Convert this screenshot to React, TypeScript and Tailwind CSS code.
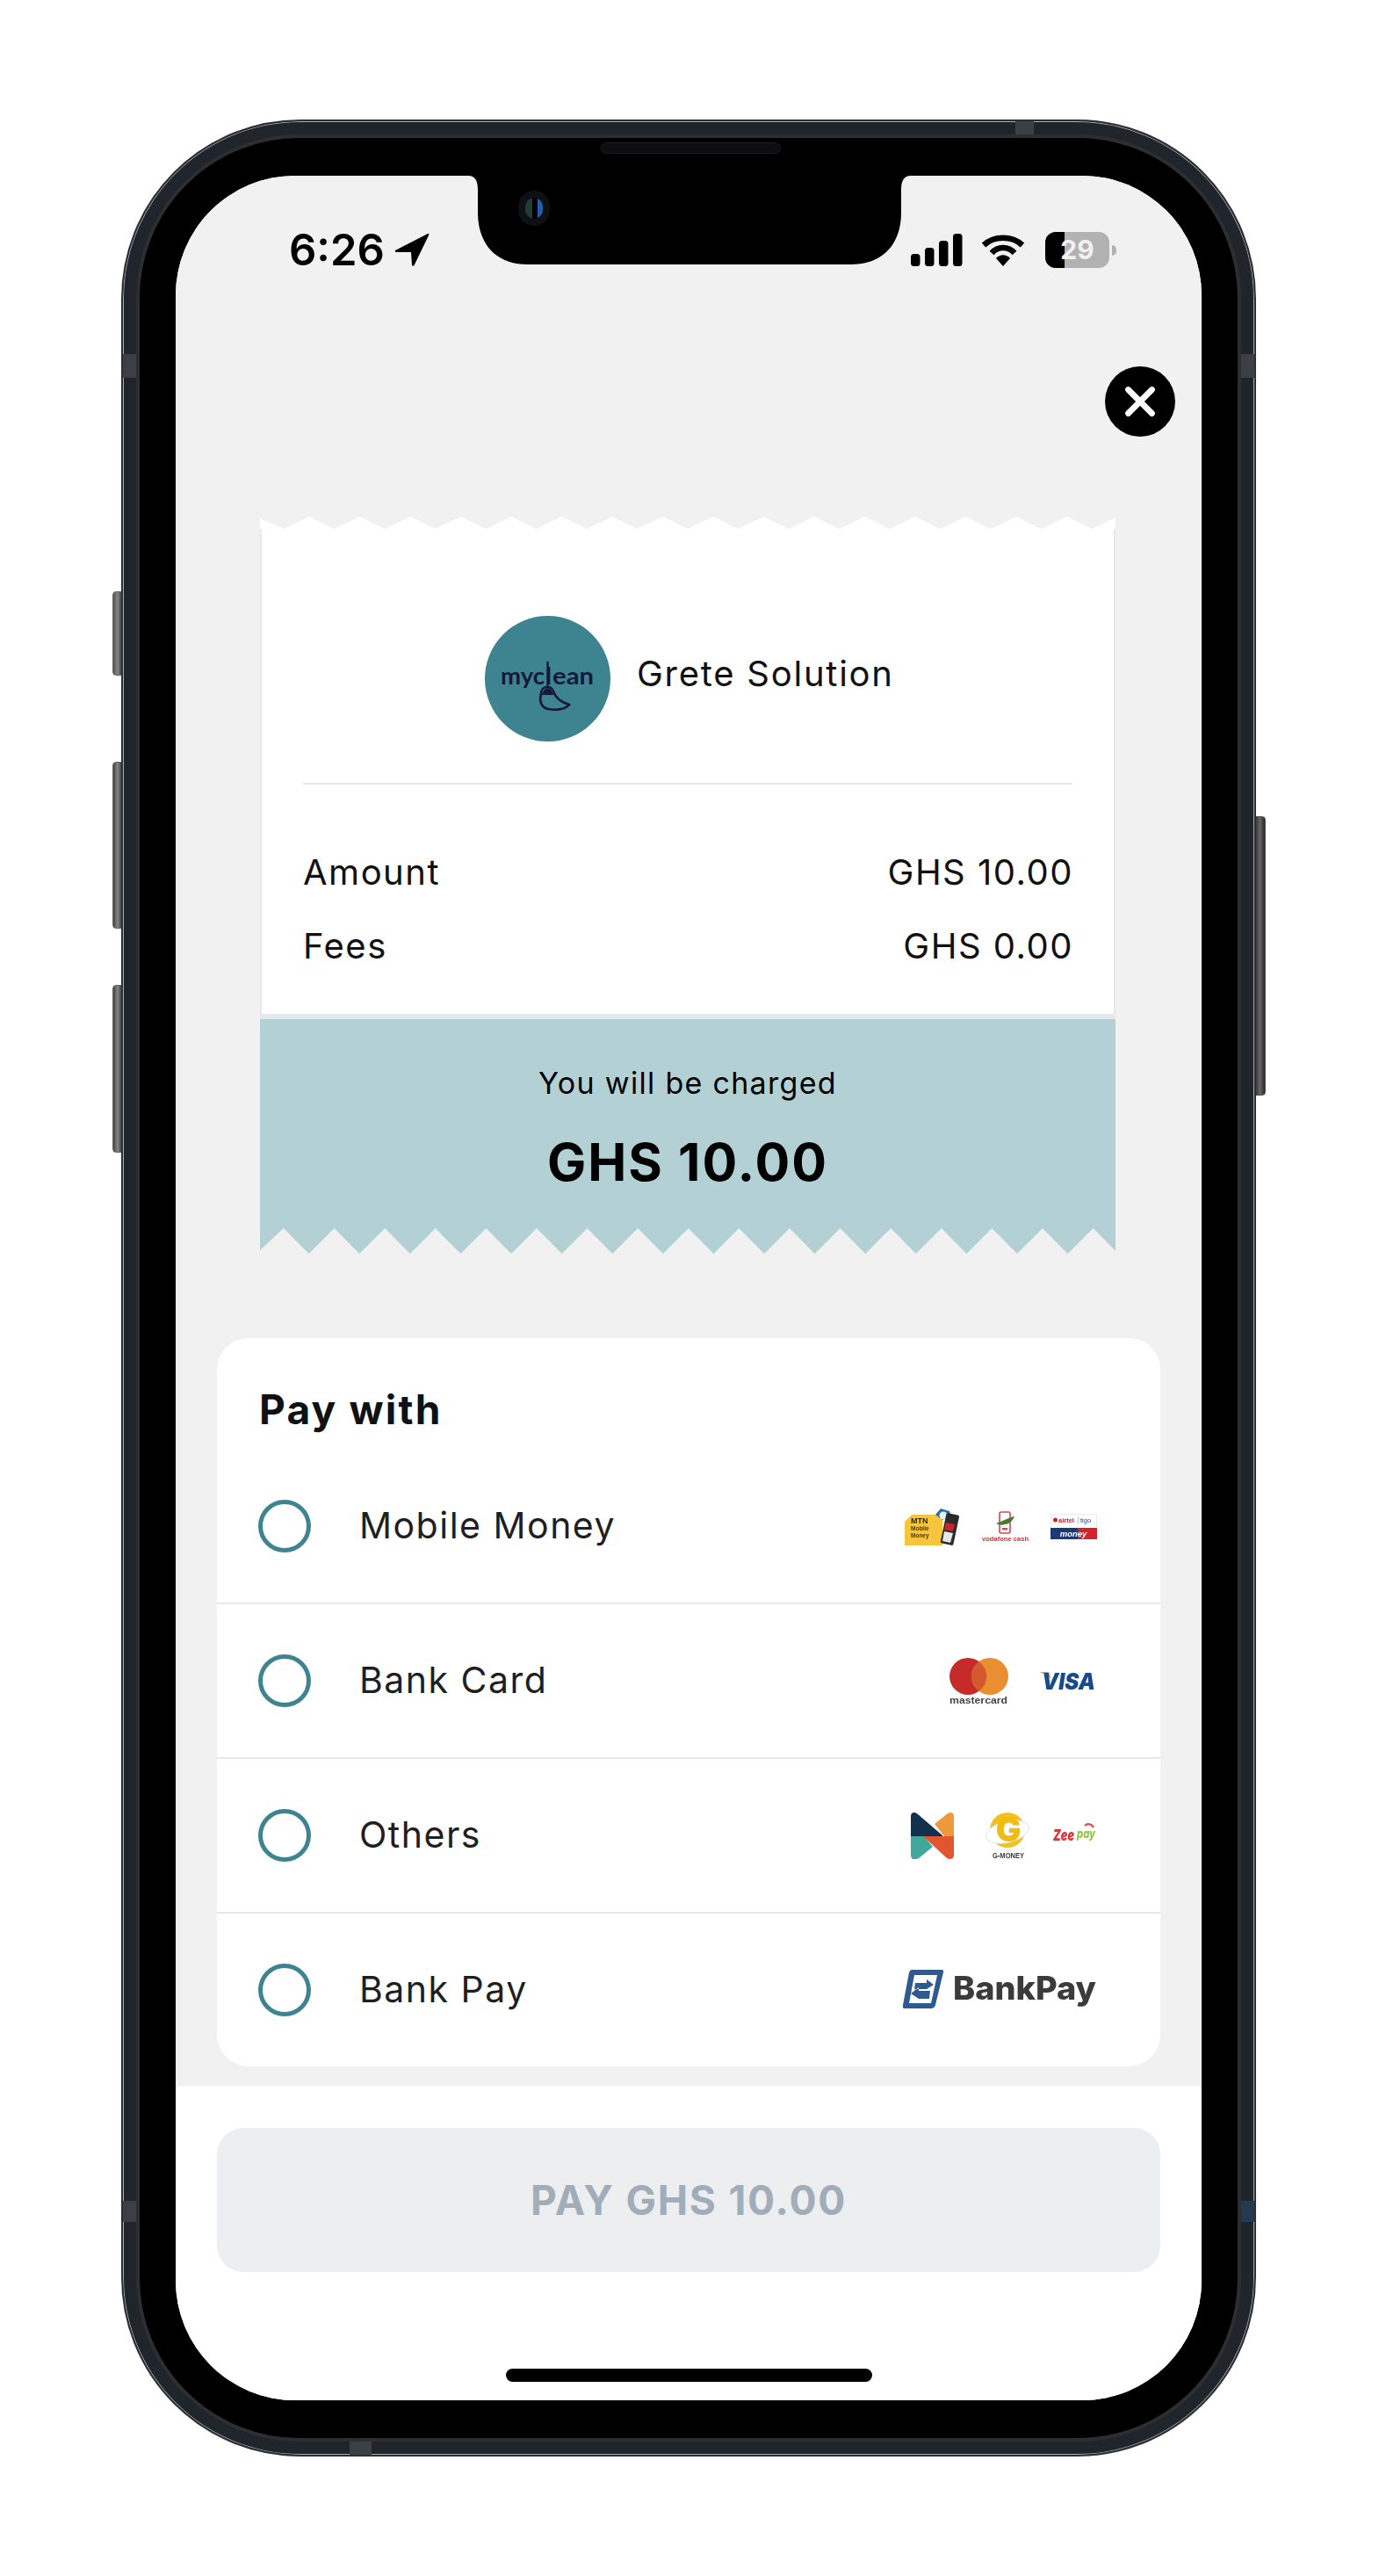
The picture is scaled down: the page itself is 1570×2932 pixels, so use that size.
import { X } from "lucide-react";

const font = { fontFamily: "Inter, sans-serif" };

function Torn({ fill, bg, h, points }: { fill: string; bg: string; h: number; points: string }) {
  return (
    <svg width="974" height={h} viewBox={`0 0 974 ${h}`} className="block" style={{ background: bg }}>
      <polygon points={points} fill={fill} />
    </svg>
  );
}

const topEdge = (() => {
  const pts: string[] = ["0,14", "0,2"];
  for (let i = 0; i < 17; i++) {
    pts.push(`${27 + i * 57.5},14`);
    pts.push(`${56 + i * 57.5},0`);
  }
  pts.push("974,7", "974,14");
  return pts.join(" ");
})();

const bottomEdge = (() => {
  const pts: string[] = ["0,0", "974,0", "974,24"];
  for (let i = 16; i >= 0; i--) {
    pts.push(`${55.6 + i * 57.6},29`);
    pts.push(`${27 + i * 57.6},0`);
  }
  pts.push("0,25");
  return pts.join(" ");
})();

function MyCleanLogo() {
  return (
    <div className="w-[143px] h-[143px] rounded-full bg-[#3d8490] shrink-0">
      <svg width="143" height="143" viewBox="0 0 143 143">
        <g fontFamily="Lato, sans-serif" fontWeight="700" fontSize="27" fill="#14193a">
          <text x="18" y="78" textLength="50" lengthAdjust="spacingAndGlyphs">myc</text>
          <text x="69.5" y="78" fontSize="26">l</text>
          <text x="77" y="78" textLength="47" lengthAdjust="spacingAndGlyphs">ean</text>
        </g>
        <path d="M71.5 52 V80" stroke="#14193a" strokeWidth="2.4" />
        <path d="M71 81 C66 81 64 85 64 89 C62 95 63 104 72 106 C82 108 92 106 96 101 C86 98 80 92 78 86 C77 83 75 81 71 81 Z" fill="none" stroke="#14193a" strokeWidth="2.6" />
        <path d="M65 90 C67 80 76 80 78 90 Z" fill="#14193a" />
      </svg>
    </div>
  );
}

function MtnLogo() {
  return (
    <svg width="66" height="43" viewBox="0 0 66 43" className="blur-[0.4px]">
      <path d="M9 8 H44 V43 H1 V16 Z" fill="#f6c53c" />
      <path d="M36 8 L42 1 L52 4 L54 10 L44 14 Z" fill="#2a6fa8" />
      <circle cx="45" cy="9" r="4.5" fill="#e8eef3" />
      <rect x="45" y="7" width="15" height="35" rx="2" transform="rotate(12 52 24)" fill="#2b2b2b" />
      <path d="M48 17 L58 19 L56 27 L46 25 Z" fill="#c9252c" />
      <path d="M46 27 L56 29 L53 40 L44 38 Z" fill="#e6e6e6" />
      <text x="8" y="18" fontFamily="Liberation Sans, sans-serif" fontWeight="700" fontSize="9" fill="#2a2a1a">MTN</text>
      <text x="8" y="26" fontFamily="Liberation Sans, sans-serif" fontWeight="700" fontSize="6.5" fill="#3a3a1a">Mobile</text>
      <text x="8" y="34" fontFamily="Liberation Sans, sans-serif" fontWeight="700" fontSize="6.5" fill="#3a3a1a">Money</text>
    </svg>
  );
}

function VodafoneLogo() {
  return (
    <svg width="54" height="35" viewBox="0 0 54 35" className="blur-[0.4px]">
      <rect x="20" y="1" width="12" height="24" rx="2" fill="#fff" stroke="#d6474f" strokeWidth="1.6" />
      <path d="M16 14 C23 12 30 7 37 6 C35 11 31 15 26 15 C23 16 20 16 16 14 Z" fill="#4b7a33" />
      <rect x="23" y="19" width="6" height="2.4" fill="#d6474f" />
      <text x="0" y="34" fontFamily="Liberation Sans, sans-serif" fontWeight="700" fontSize="7.6" fill="#c8323c" textLength="53" lengthAdjust="spacingAndGlyphs">vodafone cash</text>
    </svg>
  );
}

function AirtelLogo() {
  return (
    <svg width="53" height="29" viewBox="0 0 53 29" className="blur-[0.4px]">
      <rect x="0.5" y="0.5" width="52" height="28" fill="#fff" stroke="#e8e8ee" />
      <circle cx="5.5" cy="7" r="2.5" fill="#d0212a" />
      <text x="9" y="10" fontFamily="Liberation Sans, sans-serif" fontWeight="700" fontSize="7.5" fill="#c8232c">airtel</text>
      <rect x="31" y="3" width="0.6" height="8" fill="#999" />
      <text x="34" y="10" fontFamily="Liberation Sans, sans-serif" fontSize="7.5" fill="#27457f">tigo</text>
      <rect x="0" y="16" width="31" height="13" fill="#1b3a7a" />
      <rect x="31" y="16" width="22" height="13" fill="#d2232a" />
      <text x="26" y="26" textAnchor="middle" fontFamily="Liberation Sans, sans-serif" fontWeight="700" fontStyle="italic" fontSize="9.5" fill="#fff">money</text>
    </svg>
  );
}

function MastercardLogo() {
  return (
    <svg width="69" height="54" viewBox="0 0 69 54" className="blur-[0.4px]">
      <circle cx="22" cy="22" r="21" fill="#c62a29" />
      <circle cx="47" cy="22" r="21" fill="#e98f32" />
      <path d="M34.5 5 A21 21 0 0 1 34.5 39 A21 21 0 0 1 34.5 5 Z" fill="#d3592e" />
      <text x="1" y="53" fontFamily="Liberation Sans, sans-serif" fontSize="11" fontWeight="700" fill="#444" textLength="66" lengthAdjust="spacingAndGlyphs">mastercard</text>
    </svg>
  );
}

function VisaLogo() {
  return (
    <svg width="66" height="24" viewBox="0 0 66 24" className="blur-[0.3px] overflow-visible">
      <path d="M0 2 H11 L14 10 C10 6 5 4 0 2 Z" fill="#e9a63a" />
      <text x="3" y="22" fontFamily="Inter, sans-serif" fontWeight="900" fontStyle="italic" fontSize="26" fill="#1b4a8c" textLength="61" lengthAdjust="spacingAndGlyphs">VISA</text>
    </svg>
  );
}

function NLogo() {
  return (
    <svg width="49" height="53" viewBox="0 0 49 53" className="blur-[0.3px]">
      <path d="M0 4 Q0 0 4 0 Q6 0 8 2 L36 26 L36 27 H0 Z" fill="#14304f" />
      <path d="M49 5 V27 H38 L27 13 L42 1 Q49 -2 49 5 Z" fill="#ee9a3c" />
      <path d="M0 27 H15 L25 39 L9 52 Q0 56 0 48 Z" fill="#3fa79c" />
      <path d="M14 27 H49 V48 Q49 55 41 52 Z" fill="#e1562f" />
    </svg>
  );
}

function GMoneyLogo() {
  return (
    <svg width="50" height="53" viewBox="0 0 50 53" className="blur-[0.4px] overflow-visible">
      <circle cx="25" cy="20" r="20" fill="#f1c21f" />
      <ellipse cx="25" cy="22" rx="25" ry="12" fill="#fff" stroke="#e4e4e4" transform="rotate(-14 25 22)" />
      <text x="26" y="33" textAnchor="middle" fontFamily="Inter, sans-serif" fontWeight="900" fontSize="38" fill="#eebc14">G</text>
      <text x="8" y="52" fontFamily="Liberation Sans, sans-serif" fontWeight="700" fontSize="8.5" fill="#3b3b3b" textLength="36" lengthAdjust="spacingAndGlyphs">G-MONEY</text>
    </svg>
  );
}

function ZeepayLogo() {
  return (
    <svg width="50" height="28" viewBox="0 0 50 28" className="blur-[0.4px] overflow-visible">
      <path d="M36 3 C39 0 44 1 46 5" fill="none" stroke="#d9534f" strokeWidth="2.4" />
      <text x="0" y="20" fontFamily="Inter, sans-serif" fontWeight="900" fontStyle="italic" fontSize="18" fill="#d8363c" textLength="24" lengthAdjust="spacingAndGlyphs">Zee</text>
      <text x="27" y="17" fontFamily="Inter, sans-serif" fontWeight="800" fontStyle="italic" fontSize="14" fill="#96c24b" textLength="21" lengthAdjust="spacingAndGlyphs">pay</text>
    </svg>
  );
}

function BankPayLogo() {
  return (
    <svg width="222" height="46" viewBox="0 0 222 46" className="blur-[0.3px]">
      <path d="M11 0 H45 Q48 0 47 3 L38 40 Q37 44 33 44 H3 Q0 44 1 40 L8 3 Q9 0 11 0 Z" fill="#2f5a8e" />
      <path d="M14 6 H40 L33 38 H8 Z" fill="#fff" />
      <path d="M15 15 H28 V11 L36 17 L28 22 H14 Z M32 24 H19 V20 L10 27 L19 33 H31 Z" fill="#2f5a8e" />
      <text x="58" y="34" fontFamily="Inter, sans-serif" fontWeight="800" fontSize="37" fill="#3b3b3b" textLength="163" lengthAdjust="spacingAndGlyphs">BankPay</text>
    </svg>
  );
}

function MethodRow({ label, children, last }: { label: string; children: React.ReactNode; last?: boolean }) {
  return (
    <div className={`${last ? "h-[174px]" : "h-[176px] border-b-2 border-[#e6e8ea]"} flex items-center justify-between pl-[47px] pr-[72px]`}>
      <div className="flex items-center">
        <div className="w-[60px] h-[60px] rounded-full border-[5px] border-[#3d8490] bg-white" />
        <span className="ml-[55px] text-[41px] tracking-[1.5px] text-[#1f1f1f]">{label}</span>
      </div>
      <div className="flex items-center">{children}</div>
    </div>
  );
}

function StatusBar() {
  return (
    <div className="h-[41px] mt-[64px] pl-[129px] pr-[97px] flex items-center justify-between text-black">
      <div className="flex items-center">
        <span className="text-[49px] leading-none font-semibold">6:26</span>
        <svg width="40" height="39" viewBox="0 0 40 39" className="ml-[11px]">
          <path d="M38 1 L1 20 Q0 22 3 22 L19 22 L20 37 Q22 39 23 36 L39 3 Q40 0 38 1 Z" fill="#000" />
        </svg>
      </div>
      <div className="flex items-center">
        <svg width="59" height="37" viewBox="0 0 59 37">
          <rect x="0" y="23" width="10.5" height="14" rx="3.5" />
          <rect x="16" y="16" width="10.5" height="21" rx="3.5" />
          <rect x="32" y="8" width="10.5" height="29" rx="3.5" />
          <rect x="48" y="0" width="10.5" height="37" rx="3.5" />
        </svg>
        <svg width="50" height="37" viewBox="0 0 50 37" className="ml-[21px]">
          <path d="M3 13 C15 2 35 2 47 13" fill="none" stroke="#000" strokeWidth="6.5" />
          <path d="M12 22 C19 14 31 14 38 22" fill="none" stroke="#000" strokeWidth="6.5" />
          <path d="M17 28 C22 23 28 23 33 28 L25 37 Z" fill="#000" />
        </svg>
        <div className="relative ml-[23px] w-[73px] h-[41px] rounded-[12px] bg-[#b2b2b2] overflow-hidden">
          <div className="w-[22px] h-full bg-black" />
          <span className="absolute inset-0 flex items-center justify-center text-[30px] font-bold text-[#f1f1f1]">29</span>
        </div>
        <div className="ml-[3px] w-[5px] h-[12px] rounded-r-full bg-[#b2b2b2]" />
      </div>
    </div>
  );
}

function Receipt() {
  return (
    <div className="w-[974px] mt-[91px] ml-[96px]">
      <Torn fill="#ffffff" bg="#f1f1f1" h={14} points={topEdge} />
      <div className="bg-white border-x-2 border-b-[6px] border-[#e6e9ec] h-[558px] pt-[99px]">
        <div className="flex items-center pl-[254px] gap-[30px]">
          <MyCleanLogo />
          <span className="text-[40px] tracking-[1.75px] text-[#111] -mt-[12px]">Grete Solution</span>
        </div>
        <div className="mx-[47px] mt-[47px] h-[2px] bg-[#e6e8ea]" />
        <div className="mt-[76px] ml-[47px] mr-[46px] flex justify-between text-[40px] leading-[48px] tracking-[1.5px] text-[#111]">
          <span>Amount</span>
          <span>GHS 10.00</span>
        </div>
        <div className="mt-[36px] ml-[47px] mr-[46px] flex justify-between text-[40px] leading-[48px] tracking-[1.5px] text-[#111]">
          <span>Fees</span>
          <span>GHS 0.00</span>
        </div>
      </div>
      <div className="bg-[#b3d0d5] h-[238px] pt-[51px] text-center text-black">
        <p className="text-[34px] leading-[44px] tracking-[1.3px]">You will be charged</p>
        <p className="mt-[33px] text-[59px] leading-[70px] font-bold tracking-[2px]">GHS 10.00</p>
      </div>
      <Torn fill="#b3d0d5" bg="#f1f1f1" h={29} points={bottomEdge} />
    </div>
  );
}

export default function App() {
  return (
    <div className="min-h-[2932px] bg-white pt-[136px] pl-[138px]" style={font}>
      <div className="relative w-[1292px] h-[2660px]">
        {/* side buttons */}
        <div className="absolute -left-[10px] top-[537px] w-[12px] h-[96px] rounded-l-[4px] bg-gradient-to-r from-[#555] via-[#888] to-[#333] border border-[#666]" />
        <div className="absolute -left-[10px] top-[731px] w-[12px] h-[190px] rounded-l-[4px] bg-gradient-to-r from-[#444] via-[#888] to-[#333] border border-[#666]" />
        <div className="absolute -left-[10px] top-[985px] w-[12px] h-[191px] rounded-l-[4px] bg-gradient-to-r from-[#444] via-[#888] to-[#333] border border-[#666]" />
        <div className="absolute -right-[11px] top-[793px] w-[13px] h-[318px] rounded-r-[4px] bg-gradient-to-r from-[#333] via-[#666] to-[#2a2a2a] border border-[#555]" />

        <div className="relative h-full rounded-[204px] bg-[#20242b] border-2 border-[#2c2f34] shadow-[inset_0_0_0_1px_#a8acb0] p-[15px]">
          {/* antenna bands */}
          <div className="absolute left-[1016px] top-0 w-[21px] h-[15px] bg-[#3c3f44]" />
          <div className="absolute left-0 top-[265px] w-[15px] h-[27px] bg-[#3c3f44]" />
          <div className="absolute right-0 top-[265px] w-[15px] h-[27px] bg-[#3c3f44]" />
          <div className="absolute left-0 top-[2367px] w-[15px] h-[24px] bg-[#3c3f44]" />
          <div className="absolute right-0 top-[2367px] w-[15px] h-[24px] bg-[#243a52]" />
          <div className="absolute left-[258px] bottom-0 w-[25px] h-[15px] bg-[#3c3f44]" />

          <div className="relative h-full rounded-[186px] bg-black border-4 border-[#2c2e31] py-[43px] px-[41px]">
            {/* speaker */}
            <div className="absolute left-[525px] top-[5px] w-[205px] h-[13px] rounded-full bg-[#0d0e10] border border-[#1c1d20]" />

            <div className="relative h-full rounded-[136px] overflow-hidden bg-white flex flex-col">
              <div className="h-[2174px] bg-[#f1f1f1] flex flex-col">
                <StatusBar />
                <div className="flex justify-end pr-[30px] mt-[112px]">
                  <button className="w-[80px] h-[80px] rounded-full bg-black flex items-center justify-center">
                    <X size={54} color="#fff" strokeWidth={3} />
                  </button>
                </div>
                <Receipt />

                <div className="mt-[96px] mx-[47px] bg-white rounded-[36px] overflow-hidden">
                  <div className="h-[127px] pt-[56px] pl-[48px]">
                    <p className="text-[46px] leading-[50px] font-bold tracking-[2.2px] text-[#111]">Pay with</p>
                  </div>
                  <MethodRow label="Mobile Money">
                    <MtnLogo />
                    <div className="w-[23px]" />
                    <VodafoneLogo />
                    <div className="w-[24px]" />
                    <AirtelLogo />
                  </MethodRow>
                  <MethodRow label="Bank Card">
                    <MastercardLogo />
                    <div className="w-[34px]" />
                    <VisaLogo />
                  </MethodRow>
                  <MethodRow label="Others">
                    <NLogo />
                    <div className="w-[36px]" />
                    <GMoneyLogo />
                    <div className="w-[27px]" />
                    <ZeepayLogo />
                  </MethodRow>
                  <MethodRow label="Bank Pay" last>
                    <BankPayLogo />
                  </MethodRow>
                </div>
              </div>

              <div className="flex-1 bg-white pt-[48px] px-[47px]">
                <div className="h-[164px] rounded-[30px] bg-[#edeef0] flex items-center justify-center text-[46px] font-bold tracking-[1.8px] text-[#a2adba]">
                  PAY GHS 10.00
                </div>
                <div className="mt-[110px] mx-auto w-[417px] h-[15px] rounded-full bg-black" />
              </div>

              {/* notch */}
              <svg width="504" height="102" viewBox="0 0 504 102" className="absolute left-[333px] top-0">
                <path d="M0 0 H504 C496 0 493 6 493 16 V42 C493 78 472 101 436 101 H68 C32 101 11 78 11 42 V16 C11 6 8 0 0 0 Z" fill="#000" />
              </svg>
            </div>
            {/* camera */}
            <div className="absolute left-[431px] top-[60px] w-[36px] h-[40px] rounded-full bg-[#101014] flex items-center justify-center">
              <div className="w-[20px] h-[24px] rounded-full bg-[#05070d] overflow-hidden flex">
                <div className="w-[8px] h-full bg-[#31524c] opacity-70" />
                <div className="w-[6px] h-full bg-black" />
                <div className="w-[6px] h-full bg-[#1f5fae]" />
              </div>
            </div>
          </div>
        </div>
      </div>
    </div>
  );
}
